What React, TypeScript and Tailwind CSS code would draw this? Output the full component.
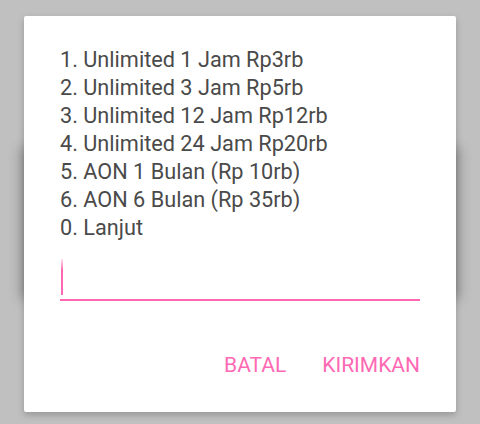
import React from "react";

const items = [
	"1. Unlimited 1 Jam Rp3rb",
	"2. Unlimited 3 Jam Rp5rb",
	"3. Unlimited 12 Jam Rp12rb",
	"4. Unlimited 24 Jam Rp20rb",
	"5. AON 1 Bulan (Rp 10rb)",
	"6. AON 6 Bulan (Rp 35rb)",
	"0. Lanjut",
];

const App: React.FC = () => {
	return (
		<div className="relative h-[424px] w-[480px] overflow-hidden bg-[#c0c0c0] pl-[24px] pt-[16px] font-['Roboto',sans-serif]">
			{/* window underneath, only its shadow shows */}
			<div className="absolute left-[24px] top-[150px] h-[146px] w-[432px] bg-white shadow-[0_0_12px_3px_rgba(0,0,0,0.28)]" />

			<div className="relative flex h-[396px] w-[432px] flex-col rounded-[2px] bg-white px-9 pt-[30px] shadow-[0_3px_7px_rgba(0,0,0,0.22)]">
				<div className="text-[21.7px] leading-[28px] text-[#4a4a4a]">
					{items.map((item) => (
						<div key={item}>{item}</div>
					))}
				</div>

				<div className="mt-2 h-[51px] border-b-2 border-[#ff69b4] pt-[9px] pl-px">
					<div className="h-[36px] w-[2px] bg-linear-to-b from-[#ffe0ef] via-[#ff69b4] via-30% to-[#ff69b4]" />
				</div>

				<div className="mt-[52px] flex justify-end gap-[36px] text-[21px] leading-[24px] text-[#ff69b4]">
					<span>BATAL</span>
					<span>KIRIMKAN</span>
				</div>
			</div>
		</div>
	);
};

export default App;
